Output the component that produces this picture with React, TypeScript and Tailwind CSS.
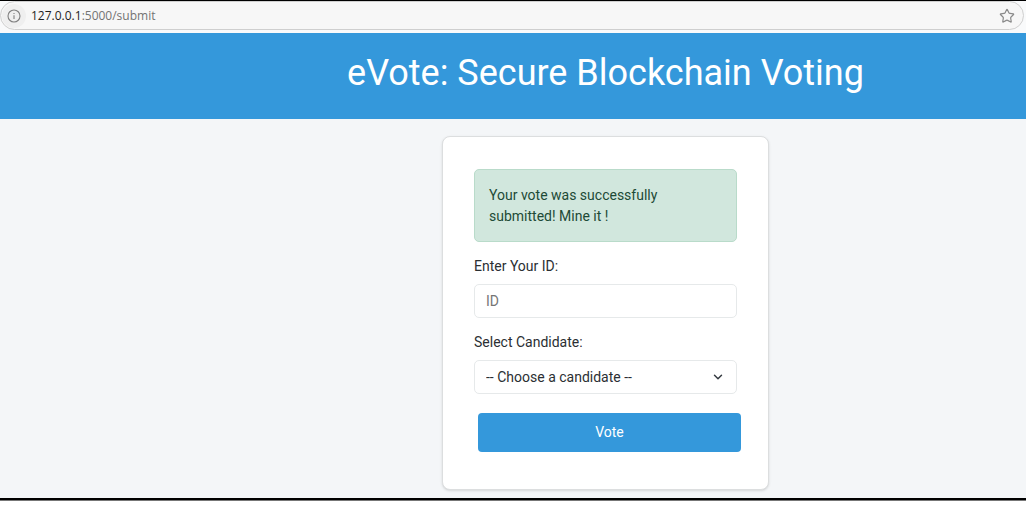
import { ChevronDown, Star } from "lucide-react";

function AddressBar() {
  return (
    <div className="border-t border-black bg-[#f9fafb] pr-[2px] pb-[3px]">
      <div className="flex h-[29px] items-center rounded-full border border-[#cfcfcf] bg-[#f7f7f7] pr-2 pl-[1px]">
        <span className="flex size-6 items-center justify-center rounded-full bg-[#efefef]">
          <svg viewBox="0 0 14 14" className="size-[14px]" fill="none" stroke="#808080" aria-hidden="true">
            <circle cx="7" cy="7" r="6" strokeWidth="1.1" />
            <path d="M7 6.2v3.8M7 4v1.1" strokeWidth="1.1" />
          </svg>
        </span>
        <p className="ml-[5px] flex-1 font-['Open_Sans','Noto_Sans',sans-serif] text-[12px] text-[#737373]">
          <span className="text-[#1f1f1f]">127.0.0.1</span>:5000/submit
        </p>
        <button type="button" aria-label="Add to favorites">
          <Star className="size-4 text-[#8a8a8a]" strokeWidth={1.8} />
        </button>
      </div>
    </div>
  );
}

function VoteForm() {
  return (
    <form
      onSubmit={(event) => event.preventDefault()}
      className="w-[327px] rounded-lg border border-[#dcdedf] bg-white px-[31px] pt-8 pb-[37px] text-[14px] leading-[21px] text-[#2b2f33] shadow-sm"
    >
      <div role="alert" className="mb-[14px] rounded-[5px] border border-[#b9dbca] bg-[#d1e7dd] px-[14px] pt-[15px] pb-[14px] text-[#1d4a36]">
        Your vote was successfully submitted! Mine it !
      </div>
      <label htmlFor="voter-id" className="mb-[7px] block">Enter Your ID:</label>
      <input
        id="voter-id"
        type="text"
        placeholder="ID"
        className="mb-[14px] block h-[34px] w-full rounded-[5px] border border-[#e6e9ea] bg-white px-[11px] placeholder:text-[#757575]"
      />
      <label htmlFor="candidate" className="mb-[7px] block">Select Candidate:</label>
      <div className="relative">
        <select
          id="candidate"
          className="block h-[34px] w-full appearance-none rounded-[5px] border border-[#e6e9ea] bg-white px-[11px]"
        >
          <option>-- Choose a candidate --</option>
        </select>
        <ChevronDown className="pointer-events-none absolute top-[10px] right-3 size-[14px] text-[#343a40]" strokeWidth={2.5} />
      </div>
      <div className="-mr-1 mt-[19px] ml-1">
        <button type="submit" className="h-[39px] w-full rounded-[4px] bg-[#3498db] text-white">
          Vote
        </button>
      </div>
    </form>
  );
}

export default function App() {
  return (
    <div className="flex min-h-screen flex-col overflow-x-hidden bg-white pb-[4px] font-[Roboto,sans-serif]">
      <AddressBar />
      <header className="bg-[#3498db] pt-[18px] pb-6 pl-[185px] text-center text-white">
        <h1 className="text-[36px] leading-[44px]">eVote: Secure Blockchain Voting</h1>
      </header>
      <main className="flex flex-1 justify-center border-b-2 border-black bg-[#f4f6f8] pt-[17px] pb-2 pl-[185px]">
        <VoteForm />
      </main>
      <div className="h-px bg-[#777777]" />
    </div>
  );
}
